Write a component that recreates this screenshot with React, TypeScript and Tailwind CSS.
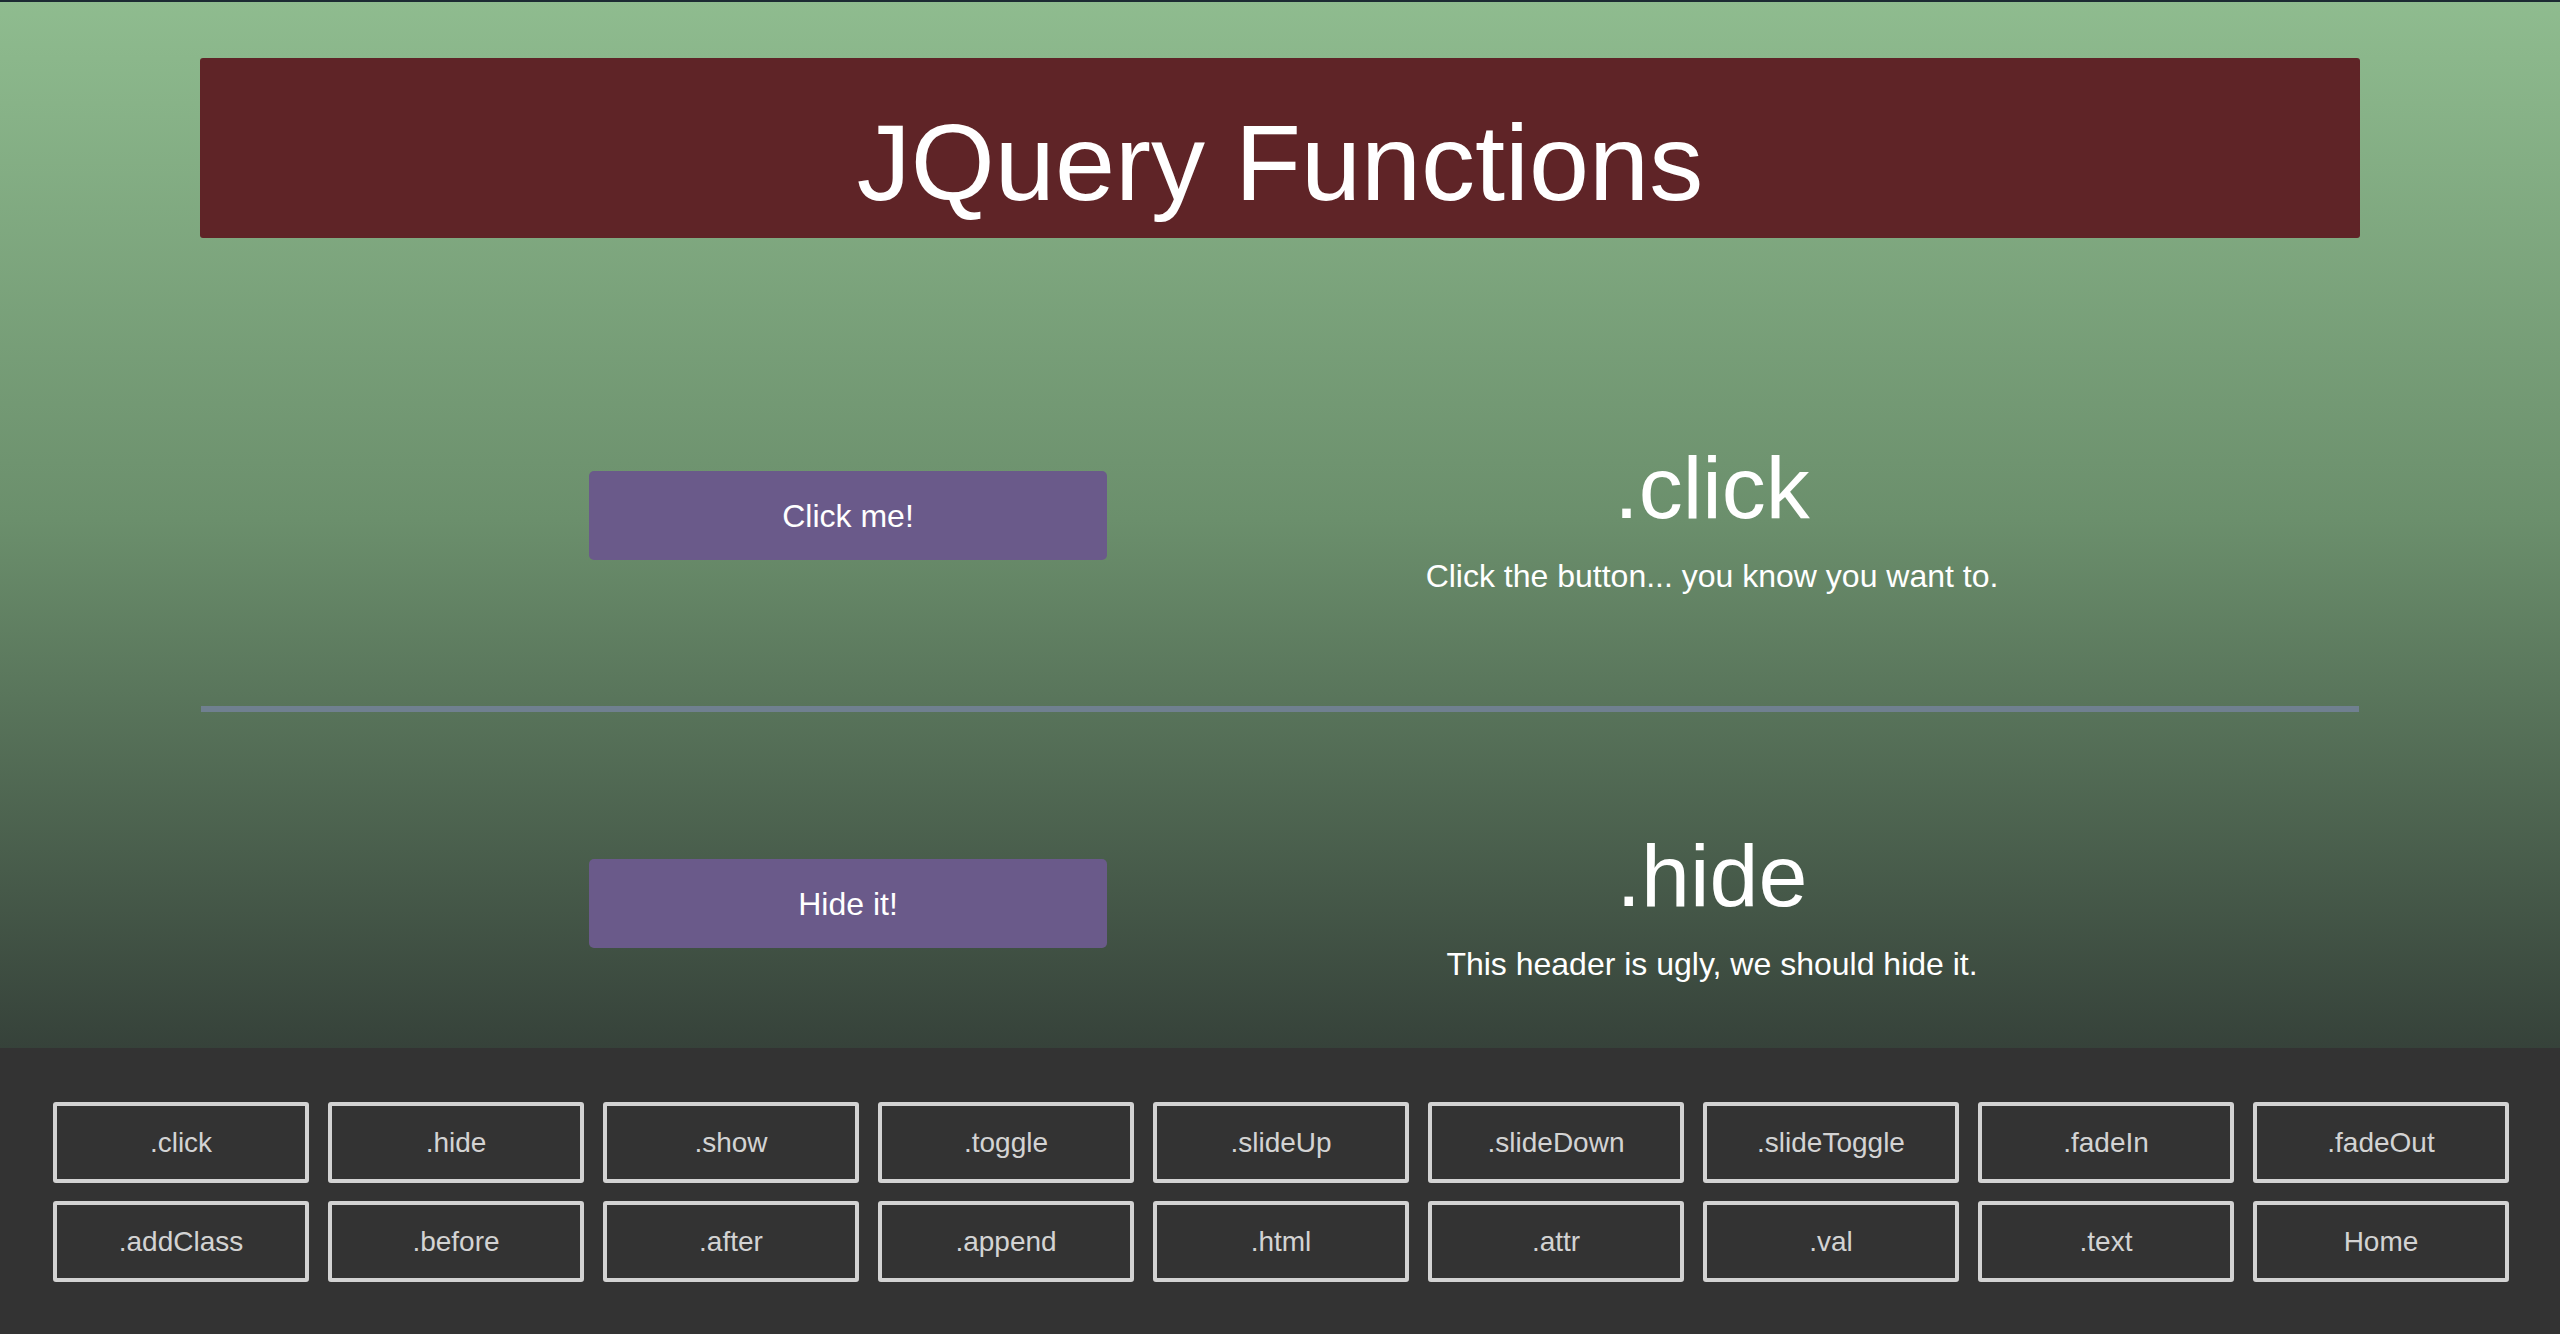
import React from "react";

const row1 = [".click", ".hide", ".show", ".toggle", ".slideUp", ".slideDown", ".slideToggle", ".fadeIn", ".fadeOut"];
const row2 = [".addClass", ".before", ".after", ".append", ".html", ".attr", ".val", ".text", "Home"];

function Section({ btn, title, text }: { btn: string; title: string; text: string }) {
  return (
    <div className="mx-auto grid w-[1728px] grid-cols-2 items-start">
      <div className="flex justify-center pt-[27px]">
        <button className="h-[89px] w-[518px] rounded-[5px] bg-[#6a5a8a] text-[32px] leading-none text-white">
          {btn}
        </button>
      </div>
      <div className="flex flex-col items-center text-white">
        <h2 className="h-[88px] text-[88px] leading-none">{title}</h2>
        <p className="mt-[28px] h-[32px] text-[32px] leading-none">{text}</p>
      </div>
    </div>
  );
}

export default function App() {
  return (
    <div
      className="flex h-[1334px] w-[2560px] flex-col overflow-hidden bg-[linear-gradient(to_bottom,#8fbc8f_0px,#6b8f6c_520px,#36423a_1048px)]"
      style={{ fontFamily: '"Liberation Sans", Arial, sans-serif' }}
    >
      <div className="h-[2px] w-full bg-[#1c2b33]" />
      <div className="mx-auto mt-[56px] flex h-[180px] w-[2160px] items-center justify-center rounded-[3px] bg-[#5f2427] pt-[30px]">
        <h1 className="text-[108px] leading-none text-white">JQuery Functions</h1>
      </div>
      <div className="mt-[206px]">
        <Section btn="Click me!" title=".click" text="Click the button... you know you want to." />
      </div>
      <div className="mx-auto mt-[114px] h-[6px] w-[2158px] bg-[#708090]" />
      <div className="mt-[120px]">
        <Section btn="Hide it!" title=".hide" text="This header is ugly, we should hide it." />
      </div>
      <div className="mt-auto h-[286px] w-full bg-[#333333] px-[53px] pt-[54px]">
        <div className="grid grid-cols-[repeat(9,256px)] gap-x-[19px] gap-y-[18px]">
          {[...row1, ...row2].map((t) => (
            <button
              key={t}
              className="flex h-[81px] items-center justify-center rounded-[3px] border-4 border-[#d3d3d3] text-[28px] leading-none text-[#d3d3d3]"
            >
              {t}
            </button>
          ))}
        </div>
      </div>
    </div>
  );
}
